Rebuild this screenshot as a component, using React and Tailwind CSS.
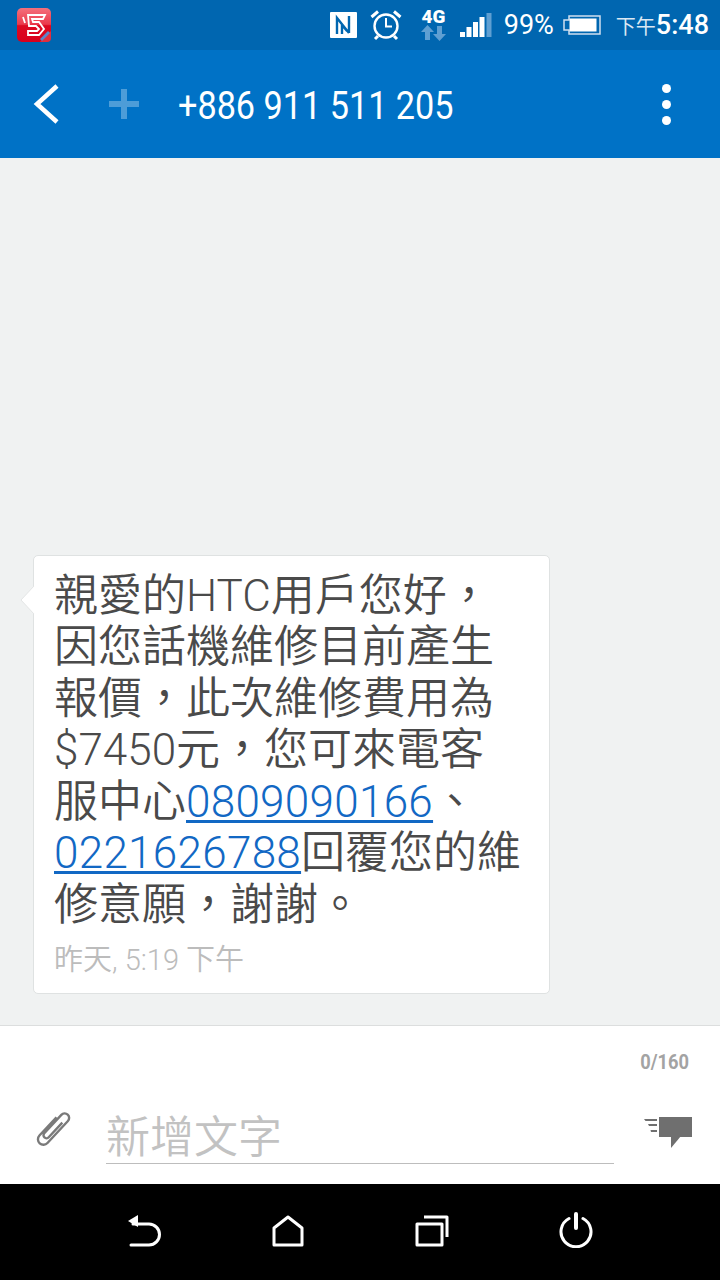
const FONT = "font-['Roboto','Noto_Sans_CJK_TC',sans-serif]";

function Lat({ children }) {
  return <span className="font-light">{children}</span>;
}

function Link({ children }) {
  return (
    <span className="font-light tracking-[0.3px] text-[#1268c4] underline decoration-[3px] underline-offset-[3px]">
      {children}
    </span>
  );
}

function StatusBar() {
  return (
    <div className="flex h-[50px] items-center justify-between bg-[#0066b0] pl-[17px] pr-[11px] text-white">
      <svg width="34" height="34" viewBox="0 0 34 34" className="-mt-[1px]">
        <defs>
          <linearGradient id="red" x1="0" y1="0" x2="0" y2="1">
            <stop offset="0" stopColor="#f4707c" />
            <stop offset="0.48" stopColor="#ea3a4c" />
            <stop offset="0.52" stopColor="#dc0a22" />
            <stop offset="1" stopColor="#d9001b" />
          </linearGradient>
        </defs>
        <rect width="34" height="34" rx="5" fill="url(#red)" />
        <path
          d="M11 7H28L26 11H15L16 14H22L27 21L22 27H11V23H20L22 21L19 18H12ZM6 9 8 15"
          fill="none"
          stroke="#fff"
          strokeWidth="1.800"
        />
        <path d="M23 34 34 23v7a4 4 0 0 1-4 4z" fill="#e0303f" />
        <path d="M23 31 31 23l2 2-8 8z" fill="#5b86c9" />
      </svg>
      <div className="flex items-center">
        <svg width="27" height="26" viewBox="0 0 27 26" className="mr-[13px]">
          <rect width="27" height="26" rx="1" fill="#fff" />
          <path d="M7 22V6l12 15M19 4v17M12 22v-9l5 6" fill="none" stroke="#0066b0" strokeWidth="2.400" />
        </svg>
        <svg width="32" height="32" viewBox="0 0 32 32" className="mr-[19px]" fill="none" stroke="#fff" strokeWidth="2.400">
          <circle cx="16" cy="17" r="11.500" />
          <path d="M16 9v8.500h6" strokeWidth="2" />
          <path d="M1.500 8 8 2.500M30.500 8 24 2.500M8 27l-3 3M24 27l3 3" strokeWidth="3" />
        </svg>
        <div className="mr-[14px] flex h-[33px] w-[25px] flex-col items-center">
          <span className="origin-top scale-x-[1.05] font-['Roboto'] text-[18px] leading-[15px] font-black">4G</span>
          <svg width="25" height="18" viewBox="0 0 25 18" fill="#5f9fd2">
            <path d="M6.500 1 13 8H9v8H4V8H0zM18.500 17 12 10h4V2h5v8h4z" />
          </svg>
        </div>
        <svg width="32" height="24" viewBox="0 0 32 24" className="mr-[12px]">
          <rect x="0" y="19" width="5" height="5" fill="#fff" />
          <rect x="6.500" y="14" width="5" height="10" fill="#fff" />
          <rect x="13" y="9" width="5" height="15" fill="#fff" />
          <rect x="19.500" y="4" width="5" height="20" fill="#fff" />
          <rect x="26.500" y="0" width="5" height="24" fill="#5f9fd2" />
        </svg>
        <span className={`${FONT} mr-[9px] text-[27px] leading-none`}>99%</span>
        <svg width="38" height="20" viewBox="0 0 38 20" className="mr-[15px]" fill="none">
          <path d="M6 1h31v18H6v-4H1V5h5z" stroke="#cfe0f0" strokeWidth="1.500" />
          <rect x="6.500" y="3.500" width="27" height="13" fill="#fff" />
        </svg>
        <span className={`${FONT} mt-[3px] text-[20px] leading-none text-[#dbe8f3]`}>下午</span>
        <span className={`${FONT} text-[27px] leading-none font-medium`}>5:48</span>
      </div>
    </div>
  );
}

function Header() {
  return (
    <div className="flex h-[108px] items-center bg-[#0072c6] text-white">
      <svg width="26" height="40" viewBox="0 0 26 40" className="ml-[33px] -mt-[1px] shrink-0" fill="none" stroke="#fff" strokeWidth="4.500">
        <path d="M24 2 4 20l20 18" />
      </svg>
      <svg width="30" height="30" viewBox="0 0 30 30" className="ml-[50px] -mt-[1px] shrink-0" fill="#4d9dd8">
        <path d="M12 0h6v12h12v6H18v12h-6V18H0v-6h12z" />
      </svg>
      <span className={`${FONT} ml-[39px] mt-[4px] origin-left scale-x-[0.9] text-[38px] leading-none whitespace-nowrap`}>+886 911 511 205</span>
      <div className="ml-auto mr-[49px] flex flex-col gap-[7px]">
        <span className="size-[9px] rounded-full bg-white" />
        <span className="size-[9px] rounded-full bg-white" />
        <span className="size-[9px] rounded-full bg-white" />
      </div>
    </div>
  );
}

function Bubble() {
  return (
    <div className="relative ml-[33px] mb-[31px] w-[517px] rounded-[5px] border border-[#dfe2e2] bg-white pl-[20px] pt-[15px] pb-[15px]">
      <svg width="15" height="30" viewBox="0 0 15 30" className="absolute -left-[14px] top-[29px]">
        <path d="M14 1 1 15l13 14z" fill="#fff" />
        <path d="M14 1 1 15l13 14" fill="none" stroke="#e4e6e6" />
      </svg>
      <div className={`${FONT} text-[44px] leading-[51.500px] font-[350] text-[#4a4a4a] whitespace-nowrap`}>
        <div>
          親愛的<Lat>HTC</Lat>用戶您好，
        </div>
        <div>因您話機維修目前產生</div>
        <div>報價，此次維修費用為</div>
        <div>
          <Lat>$7450</Lat>元，您可來電客
        </div>
        <div>
          服中心<Link>0809090166</Link>、
        </div>
        <div>
          <Link>0221626788</Link>回覆您的維
        </div>
        <div>修意願，謝謝。</div>
      </div>
      <div className={`${FONT} mt-[11px] text-[29px] leading-[36px] font-[350] text-[#bcbcbc]`}>
        昨天<Lat>, 5:19 </Lat>下午
      </div>
    </div>
  );
}

function Composer() {
  return (
    <div className="h-[159px] border-t border-[#dcdede] bg-white">
      <div className="flex justify-end pt-[23px] pr-[31px]">
        <span className={`${FONT} origin-right scale-x-[0.87] text-[21px] leading-[26px] font-bold text-[#a3a3a3]`}>0/160</span>
      </div>
      <div className="mt-[36px] flex items-start">
        <svg width="36" height="38" viewBox="0 0 36 38" className="ml-[35px] -mt-[1px] overflow-visible" fill="none" stroke="#7a7a7a" strokeWidth="2.400">
          <path transform="rotate(43 18 19)" d="M12.500 8v25a5.500 5.500 0 0 0 11 0V3a4.500 4.500 0 0 0-9 0v25a3 3 0 0 0 6 0V8" />
        </svg>
        <div className={`${FONT} ml-[35px] h-[53px] w-[508px] border-b border-[#bdbdbd] text-[44px] leading-[55px] font-[350] text-[#c2c2c2]`}>新增文字</div>
        <svg width="48" height="32" viewBox="0 0 48 32" className="ml-[30px] mt-[6px]" fill="#6f6f6f">
          <rect x="15" y="0" width="33" height="20" />
          <path d="M27 19h10l-10 12z" />
          <path d="M0 2h13v2H1.500zM4 7h9v2H5zM6.500 13H13v2H7z" />
        </svg>
      </div>
    </div>
  );
}

function NavBar() {
  return (
    <div className="flex h-[96px] items-start bg-black pt-[31px] text-white">
      <svg width="36" height="34" viewBox="0 0 36 34" className="ml-[127px]" fill="none" stroke="#fff" strokeWidth="3" strokeLinecap="round">
        <path d="M6 9h16a10.500 10.500 0 0 1 0 21H4" />
        <path d="M1 6 11 0v12z" fill="#fff" stroke="none" />
      </svg>
      <svg width="32" height="32" viewBox="0 0 32 32" className="ml-[109px]" fill="none" stroke="#fff" strokeWidth="3" strokeLinejoin="round">
        <path d="M2 13 16 2l14 11v17H2z" />
      </svg>
      <svg width="34" height="32" viewBox="0 0 34 32" className="ml-[111px]" fill="none" stroke="#fff" strokeWidth="3" strokeLinejoin="round">
        <rect x="2" y="9" width="25" height="21" />
        <path d="M9 2h23v20" />
      </svg>
      <svg width="34" height="36" viewBox="0 0 34 36" className="ml-[110px] -mt-[3px]" fill="none" stroke="#fff" strokeWidth="3" strokeLinecap="round">
        <path d="M10 6.500a15 15 0 1 0 14 0" />
        <path d="M17 2v14" strokeWidth="4" />
      </svg>
    </div>
  );
}

export default function App() {
  return (
    <div className="flex h-[1280px] w-[720px] flex-col overflow-hidden bg-[#f0f2f2]">
      <StatusBar />
      <Header />
      <div className="flex flex-1 flex-col justify-end">
        <Bubble />
      </div>
      <Composer />
      <NavBar />
    </div>
  );
}
